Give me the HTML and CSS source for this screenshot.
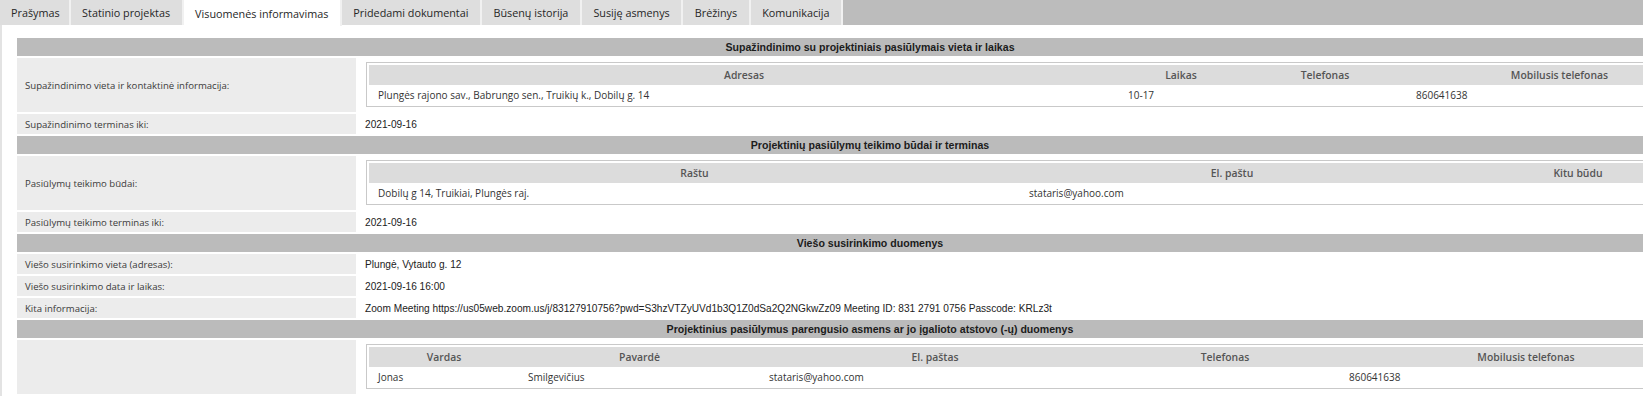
FILE: index.html
```html
<!DOCTYPE html>
<html lang="lt">
<head>
<meta charset="utf-8">
<title>Visuomenės informavimas</title>
<link rel="stylesheet" href="styles.css">
</head>
<body>
<nav class="tabs">
  <a class="tab">Prašymas</a>
  <a class="tab">Statinio projektas</a>
  <a class="tab active">Visuomenės informavimas</a>
  <a class="tab">Pridedami dokumentai</a>
  <a class="tab">Būsenų istorija</a>
  <a class="tab">Susiję asmenys</a>
  <a class="tab">Brėžinys</a>
  <a class="tab">Komunikacija</a>
</nav>
<main class="page">
  <section class="block">
    <div class="block-title">Supažindinimo su projektiniais pasiūlymais vieta ir laikas</div>
    <div class="label">Supažindinimo vieta ir kontaktinė informacija:</div>
    <div class="value nested">
      <div class="sub">
        <table class="sub-table">
          <colgroup><col class="c750"><col class="c124"><col class="c164"><col></colgroup>
          <thead><tr><th>Adresas</th><th>Laikas</th><th>Telefonas</th><th>Mobilusis telefonas</th></tr></thead>
          <tbody><tr><td>Plungės rajono sav., Babrungo sen., Truikių k., Dobilų g. 14</td><td>10-17</td><td></td><td>860641638</td></tr></tbody>
        </table>
      </div>
    </div>
    <div class="label">Supažindinimo terminas iki:</div>
    <div class="value">2021-09-16</div>
  </section>

  <section class="block">
    <div class="block-title">Projektinių pasiūlymų teikimo būdai ir terminas</div>
    <div class="label">Pasiūlymų teikimo būdai:</div>
    <div class="value nested">
      <div class="sub">
        <table class="sub-table">
          <colgroup><col class="c651"><col class="c424"><col></colgroup>
          <thead><tr><th>Raštu</th><th>El. paštu</th><th>Kitu būdu</th></tr></thead>
          <tbody><tr><td>Dobilų g 14, Truikiai, Plungės raj.</td><td>stataris@yahoo.com</td><td></td></tr></tbody>
        </table>
      </div>
    </div>
    <div class="label">Pasiūlymų teikimo terminas iki:</div>
    <div class="value">2021-09-16</div>
  </section>

  <section class="block">
    <div class="block-title">Viešo susirinkimo duomenys</div>
    <div class="label">Viešo susirinkimo vieta (adresas):</div>
    <div class="value">Plungė, Vytauto g. 12</div>
    <div class="label">Viešo susirinkimo data ir laikas:</div>
    <div class="value">2021-09-16 16:00</div>
    <div class="label">Kita informacija:</div>
    <div class="value">Zoom Meeting https://us05web.zoom.us/j/83127910756?pwd=S3hzVTZyUVd1b3Q1Z0dSa2Q2NGkwZz09 Meeting ID: 831 2791 0756 Passcode: KRLz3t</div>
  </section>

  <section class="block">
    <div class="block-title">Projektinius pasiūlymus parengusio asmens ar jo įgalioto atstovo (-ų) duomenys</div>
    <div class="label"></div>
    <div class="value nested">
      <div class="sub">
        <table class="sub-table">
          <colgroup><col class="c150"><col class="c241"><col class="c350"><col class="c230"><col></colgroup>
          <thead><tr><th>Vardas</th><th>Pavardė</th><th>El. paštas</th><th>Telefonas</th><th>Mobilusis telefonas</th></tr></thead>
          <tbody><tr><td>Jonas</td><td>Smilgevičius</td><td>stataris@yahoo.com</td><td></td><td>860641638</td></tr></tbody>
        </table>
      </div>
    </div>
  </section>
</main>
</body>
</html>
```
FILE: styles.css
```css
html, body {
  margin: 0;
  padding: 0;
  overflow: hidden;
  background: #ffffff;
}

body {
  font-family: "Open Sans", "Noto Sans", sans-serif;
  color: #333333;
}

.tabs {
  display: flex;
  height: 25px;
  background: #bcbcbc;
}

.tab {
  display: flex;
  align-items: center;
  padding: 0 11.5px;
  background: #dedede;
  border-right: 2px solid #f1f1f1;
  font-size: 10.8px;
  color: #262626;
  white-space: nowrap;
}

.tab:first-child {
  padding: 0 9px 0 11px;
}

.tab.active {
  background: #ffffff;
  height: 26px;
}

.page {
  display: flex;
  flex-direction: column;
  gap: 2px;
  width: max-content;
  padding: 13px 0 20px 15px;
  border-left: 2px solid #e3e3e3;
}

.block {
  display: grid;
  grid-template-columns: 339px 1365px;
  gap: 2px;
  width: 1706px;
}

.block-title {
  grid-column: 1 / -1;
  height: 18px;
  line-height: 18px;
  background: #bbbbbb;
  text-align: center;
  font-family: "Liberation Sans", Arial, sans-serif;
  font-weight: bold;
  font-size: 10.6px;
  color: #1c1c1c;
}

.label {
  display: flex;
  align-items: center;
  min-height: 20px;
  padding: 0 8px;
  background: #ececec;
  font-size: 9.6px;
  color: #3a3a3a;
}

.value {
  display: flex;
  align-items: center;
  min-height: 20px;
  padding: 0 7px;
  font-family: "Liberation Sans", Arial, sans-serif;
  font-size: 10.15px;
  color: #222222;
  white-space: nowrap;
}

.value.nested {
  display: block;
  padding: 4px 8px 5px;
}

.sub {
  border: 1px solid #c9c9c9;
  padding: 2px;
}

.sub-table {
  width: 100%;
  border-collapse: collapse;
  table-layout: fixed;
}

.c750 { width: 750px; }
.c124 { width: 124px; }
.c164 { width: 164px; }
.c651 { width: 651px; }
.c424 { width: 424px; }
.c150 { width: 150px; }
.c241 { width: 241px; }
.c350 { width: 350px; }
.c230 { width: 230px; }

.sub-table th {
  height: 20px;
  padding: 0;
  background: #dcdcdc;
  font-family: "Open Sans", "Noto Sans", sans-serif;
  font-weight: 600;
  font-size: 10.4px;
  color: #555555;
  text-align: center;
}

.sub-table td {
  height: 19px;
  padding: 0 9px;
  font-family: "Open Sans", "Noto Sans", sans-serif;
  font-size: 10px;
  color: #333333;
  text-align: left;
  white-space: nowrap;
}
```
